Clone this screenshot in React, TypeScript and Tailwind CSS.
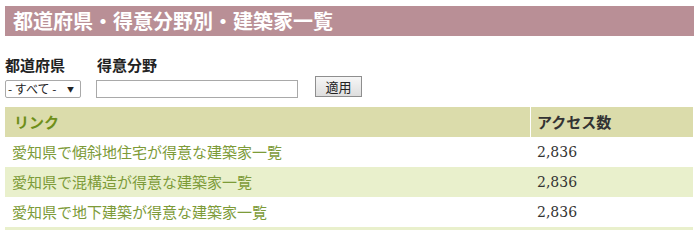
const rows = [
    { name: "愛知県で傾斜地住宅が得意な建築家一覧", count: "2,836" },
    { name: "愛知県で混構造が得意な建築家一覧", count: "2,836" },
    { name: "愛知県で地下建築が得意な建築家一覧", count: "2,836" },
];

const jp = "font-['Meiryo','Noto_Sans_CJK_JP',sans-serif]";

export default function App() {
    return (
        <div className={`w-[700px] h-[230px] overflow-hidden bg-white px-[5px] pt-[6px] ${jp}`}>
            <h1 className="h-[30px] w-[689px] bg-[#b98f96] pl-[8px] text-[20px] font-bold leading-[30px] text-white">
                都道府県・得意分野別・建築家一覧
            </h1>

            <form className="mt-[19px] flex items-end" onSubmit={(e) => e.preventDefault()}>
                <div className="flex flex-col">
                    <label className="text-[15px] font-bold leading-[20px] text-[#222]">都道府県</label>
                    <div className="mt-[5px] flex h-[18px] w-[76px] items-center justify-between rounded-[2px] border border-[#a9a9a9] bg-white pl-[2px] pr-[6px] text-[12px] leading-none text-[#222]">
                        <span>- すべて -</span>
                        <span className="text-[7px]">▼</span>
                    </div>
                </div>
                <div className="ml-[15px] flex flex-col">
                    <label className="pl-[1px] text-[15px] font-bold leading-[20px] text-[#222]">得意分野</label>
                    <input
                        type="text"
                        className="mt-[5px] h-[18px] w-[202px] border border-[#a9a9a9] bg-white outline-none"
                    />
                </div>
                <button
                    type="submit"
                    className="mb-[1px] ml-[17px] h-[21px] w-[47px] border border-[#8e8e8e] bg-gradient-to-b from-[#f6f6f6] to-[#dedede] text-[13px] leading-none text-[#222]"
                >
                    適用
                </button>
            </form>

            <div className="mt-[9px] w-[688px]">
                <div className="grid grid-cols-[525px_163px] bg-[#dbdcab]">
                    <div className="h-[30px] pl-[9px] text-[15px] font-bold leading-[30px] text-[#6e8f1a]">リンク</div>
                    <div className="h-[30px] border-l border-white pl-[6px] text-[15px] font-bold leading-[30px] text-[#333]">
                        アクセス数
                    </div>
                </div>
                {rows.map((row, i) => (
                    <div
                        key={row.name}
                        className={`grid grid-cols-[525px_163px] ${i % 2 === 1 ? "bg-[#e9f0cc]" : "bg-white"}`}
                    >
                        <a href="#" className="h-[30px] pl-[7px] text-[15px] leading-[30px] text-[#7d9b38]">
                            {row.name}
                        </a>
                        <div className="h-[30px] pl-[7px] font-['Georgia','DejaVu_Serif',serif] text-[14px] leading-[30px] text-[#333]">
                            {row.count}
                        </div>
                    </div>
                ))}
                <div className="h-[4px] bg-[#e9f0cc]" />
            </div>
        </div>
    );
}
